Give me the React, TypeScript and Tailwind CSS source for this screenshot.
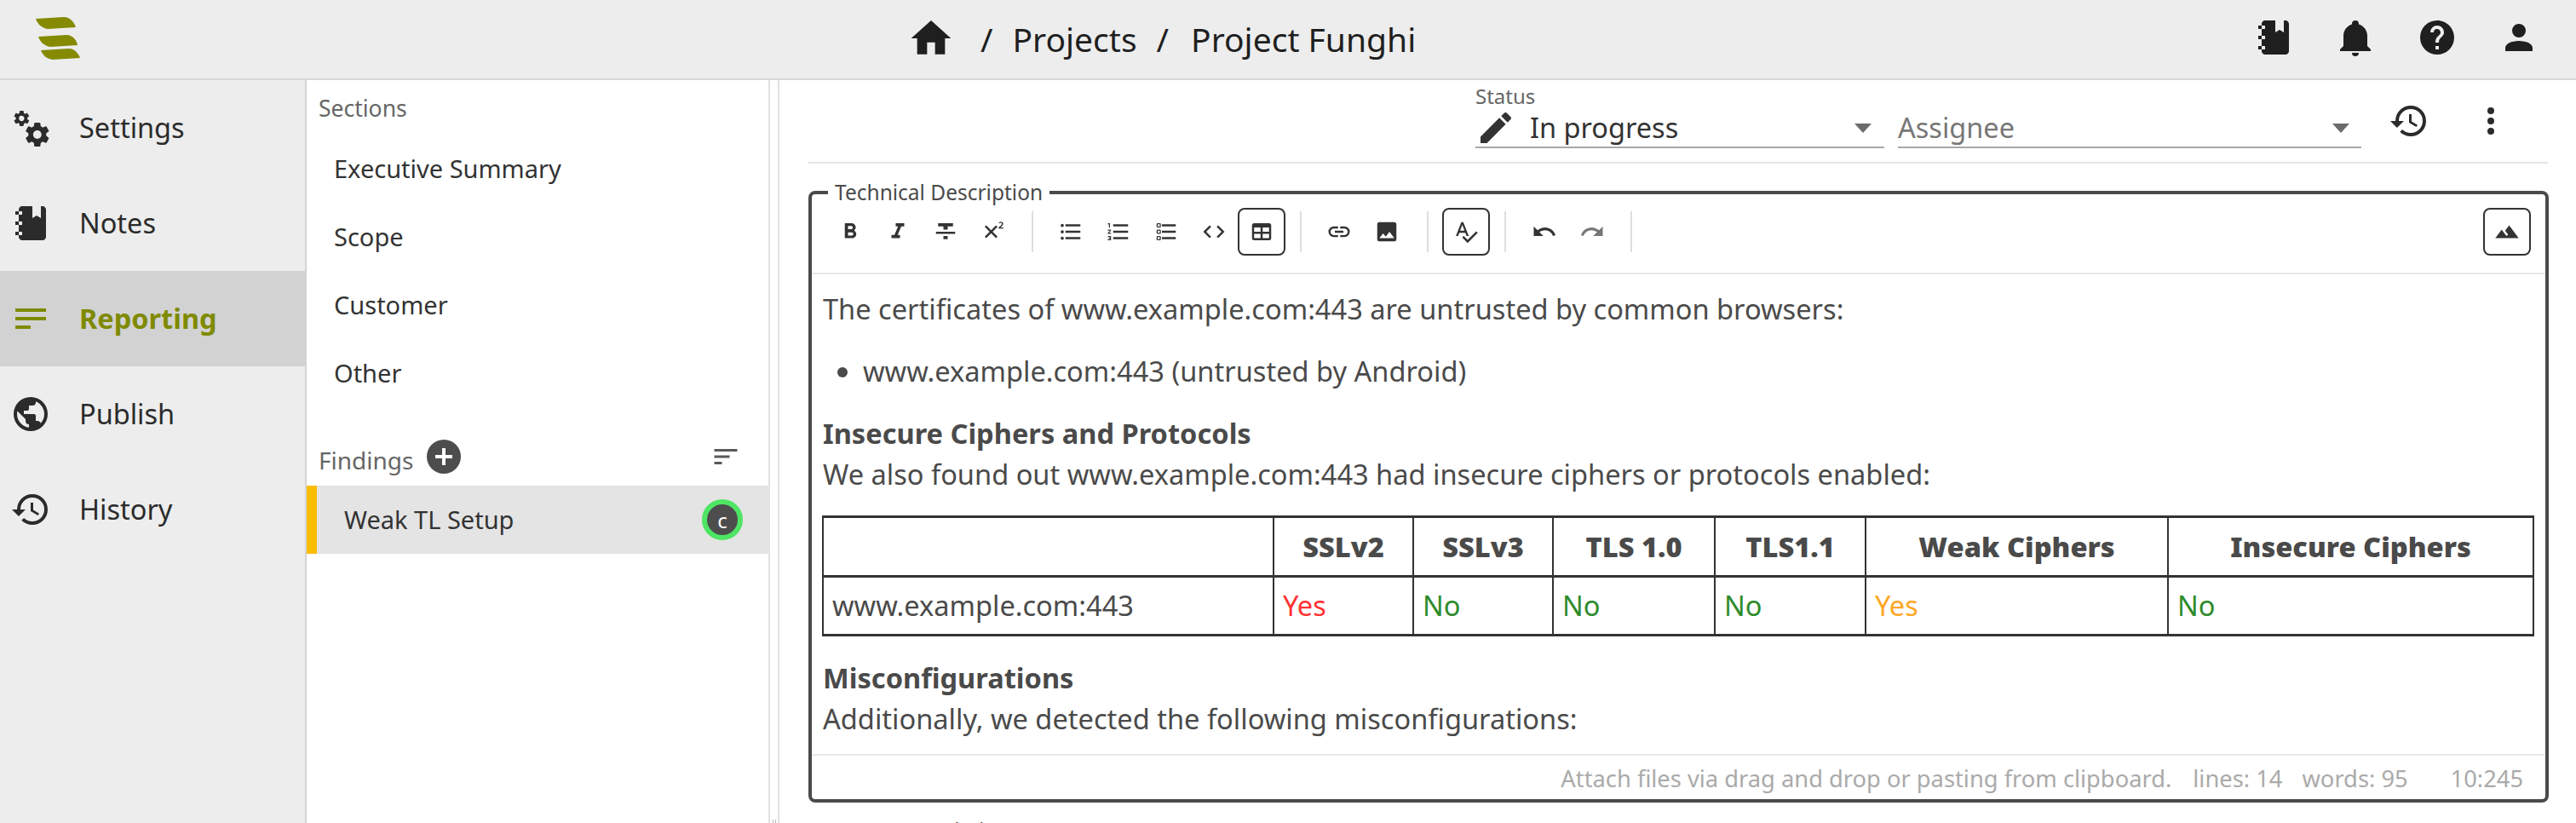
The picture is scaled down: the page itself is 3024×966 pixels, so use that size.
import type { ReactNode } from 'react'

const P = {
  home: 'M10,20V14H14V20H19V12H22L12,3L2,12H5V20H10Z',
  cogs: 'M15.9,18.45C17.25,18.45 18.35,17.35 18.35,16C18.35,14.65 17.25,13.55 15.9,13.55C14.54,13.55 13.45,14.65 13.45,16C13.45,17.35 14.54,18.45 15.9,18.45M21.1,16.68L22.58,17.84C22.71,17.95 22.75,18.13 22.66,18.29L21.26,20.71C21.17,20.86 21,20.92 20.83,20.86L19.09,20.16C18.73,20.44 18.33,20.67 17.91,20.85L17.64,22.7C17.62,22.87 17.47,23 17.3,23H14.5C14.32,23 14.18,22.87 14.15,22.7L13.89,20.85C13.46,20.67 13.07,20.44 12.71,20.16L10.96,20.86C10.81,20.92 10.62,20.86 10.54,20.71L9.14,18.29C9.05,18.13 9.09,17.95 9.22,17.84L10.7,16.68L10.65,16L10.7,15.31L9.22,14.16C9.09,14.05 9.05,13.86 9.14,13.71L10.54,11.29C10.62,11.13 10.81,11.07 10.96,11.13L12.71,11.84C13.07,11.56 13.46,11.32 13.89,11.15L14.15,9.29C14.18,9.13 14.32,9 14.5,9H17.3C17.47,9 17.62,9.13 17.64,9.29L17.91,11.15C18.33,11.32 18.73,11.56 19.09,11.84L20.83,11.13C21,11.07 21.17,11.13 21.26,11.29L22.66,13.71C22.75,13.86 22.71,14.05 22.58,14.16L21.1,15.31L21.15,16L21.1,16.68M6.69,8.07C7.56,8.07 8.26,7.37 8.26,6.5C8.26,5.63 7.56,4.92 6.69,4.92A1.58,1.58 0 0,0 5.11,6.5C5.11,7.37 5.82,8.07 6.69,8.07M10.03,6.94L11,7.68C11.07,7.75 11.09,7.87 11.03,7.97L10.13,9.53C10.08,9.63 9.96,9.67 9.86,9.63L8.74,9.18L8,9.62L7.81,10.81C7.79,10.92 7.7,11 7.59,11H5.79C5.67,11 5.58,10.92 5.56,10.81L5.4,9.62L4.64,9.18L3.5,9.63C3.41,9.67 3.3,9.63 3.24,9.53L2.34,7.97C2.28,7.87 2.31,7.75 2.39,7.68L3.34,6.94L3.31,6.5L3.34,6.06L2.39,5.32C2.31,5.25 2.28,5.13 2.34,5.03L3.24,3.47C3.3,3.37 3.41,3.33 3.5,3.37L4.63,3.82L5.4,3.38L5.56,2.19C5.58,2.08 5.67,2 5.79,2H7.59C7.7,2 7.79,2.08 7.81,2.19L8,3.38L8.74,3.82L9.86,3.37C9.96,3.33 10.08,3.37 10.13,3.47L11.03,5.03C11.09,5.13 11.07,5.25 11,5.32L10.03,6.06L10.06,6.5L10.03,6.94Z',
  notebook: 'M3,7V5H5V4C5,2.89 5.9,2 7,2H13V9L15.5,7.5L18,9V2H19C20.05,2 21,2.95 21,4V20C21,21.05 20.05,22 19,22H7C5.95,22 5,21.05 5,20V19H3V17H5V13H3V11H5V7H3M5,5V7H7V5H5M5,19H7V17H5V19M5,13H7V11H5V13Z',
  text: 'M21,6V8H3V6H21M3,18H12V16H3V18M3,13H21V11H3V13Z',
  earth: 'M17.9,17.39C17.64,16.59 16.89,16 16,16H15V13A1,1 0 0,0 14,12H8V10H10A1,1 0 0,0 11,9V7H13A2,2 0 0,0 15,5V4.59C17.93,5.77 20,8.64 20,12C20,14.08 19.2,15.97 17.9,17.39M11,19.93C7.05,19.44 4,16.08 4,12C4,11.38 4.08,10.78 4.21,10.21L9,15V16A2,2 0 0,0 11,18M12,2A10,10 0 0,0 2,12A10,10 0 0,0 12,22A10,10 0 0,0 22,12A10,10 0 0,0 12,2Z',
  history: 'M13.5,8H12V13L16.28,15.54L17,14.33L13.5,12.25V8M13,3A9,9 0 0,0 4,12H1L4.96,16.03L9,12H6A7,7 0 0,1 13,5A7,7 0 0,1 20,12A7,7 0 0,1 13,19C11.07,19 9.32,18.21 8.06,16.94L6.64,18.36C8.27,20 10.5,21 13,21A9,9 0 0,0 22,12A9,9 0 0,0 13,3',
  sort: 'M3,13H15V11H3M3,6V8H21V6M3,18H9V16H3V18Z',
  bell: 'M21,19V20H3V19L5,17V11C5,7.9 7.03,5.17 10,4.29C10,4.19 10,4.1 10,4A2,2 0 0,1 12,2A2,2 0 0,1 14,4C14,4.1 14,4.19 14,4.29C16.97,5.17 19,7.9 19,11V17L21,19M14,21A2,2 0 0,1 12,23A2,2 0 0,1 10,21',
  help: 'M15.07,11.25L14.17,12.17C13.45,12.89 13,13.5 13,15H11V14.5C11,13.39 11.45,12.39 12.17,11.67L13.41,10.41C13.78,10.05 14,9.55 14,9C14,7.89 13.1,7 12,7A2,2 0 0,0 10,9H8A4,4 0 0,1 12,5A4,4 0 0,1 16,9C16,9.88 15.64,10.67 15.07,11.25M13,19H11V17H13M12,2A10,10 0 0,0 2,12A10,10 0 0,0 12,22A10,10 0 0,0 22,12C22,6.47 17.5,2 12,2Z',
  account: 'M12,4A4,4 0 0,1 16,8A4,4 0 0,1 12,12A4,4 0 0,1 8,8A4,4 0 0,1 12,4M12,14C16.42,14 20,15.79 20,18V20H4V18C4,15.79 7.58,14 12,14Z',
  pencil: 'M20.71,7.04C21.1,6.65 21.1,6 20.71,5.63L18.37,3.29C18,2.9 17.35,2.9 16.96,3.29L15.12,5.12L18.87,8.87M3,17.25V21H6.75L17.81,9.93L14.06,6.18L3,17.25Z',
  dots: 'M12,16A2,2 0 0,1 14,18A2,2 0 0,1 12,20A2,2 0 0,1 10,18A2,2 0 0,1 12,16M12,10A2,2 0 0,1 14,12A2,2 0 0,1 12,14A2,2 0 0,1 10,12A2,2 0 0,1 12,10M12,4A2,2 0 0,1 14,6A2,2 0 0,1 12,8A2,2 0 0,1 10,6A2,2 0 0,1 12,4Z',
  plus: 'M17,13H13V17H11V13H7V11H11V7H13V11H17M12,2A10,10 0 0,0 2,12A10,10 0 0,0 12,22A10,10 0 0,0 22,12A10,10 0 0,0 12,2Z',
  bold: 'M13.5,15.5H10V12.5H13.5A1.5,1.5 0 0,1 15,14A1.5,1.5 0 0,1 13.5,15.5M10,6.5H13A1.5,1.5 0 0,1 14.5,8A1.5,1.5 0 0,1 13,9.5H10M15.6,10.79C16.57,10.11 17.25,9 17.25,8C17.25,5.74 15.5,4 13.25,4H7V18H14.04C16.14,18 17.75,16.3 17.75,14.21C17.75,12.69 16.89,11.39 15.6,10.79Z',
  italic: 'M10,4V7H12.21L8.79,15H6V18H14V15H11.79L15.21,7H18V4H10Z',
  strike: 'M3,14H21V12H3M5,4V7H10V10H14V7H19V4M10,19H14V16H10V19Z',
  sup: 'M16,7.41L11.41,12L16,16.59L14.59,18L10,13.41L5.41,18L4,16.59L8.59,12L4,7.41L5.41,6L10,10.59L14.59,6L16,7.41M17,9V8L19.2,5.9C19.7,5.4 20,5 20,4.5C20,4 19.6,3.6 19,3.6C18.4,3.6 17.9,3.8 17.4,4.1V3C17.9,2.7 18.5,2.5 19.2,2.5C20.4,2.5 21.3,3.2 21.3,4.4C21.3,5.2 20.9,5.8 20.2,6.5L18.8,7.9H21.5V9H17Z',
  ul: 'M7,5H21V7H7V5M7,13V11H21V13H7M4,4.5A1.5,1.5 0 0,1 5.5,6A1.5,1.5 0 0,1 4,7.5A1.5,1.5 0 0,1 2.5,6A1.5,1.5 0 0,1 4,4.5M4,10.5A1.5,1.5 0 0,1 5.5,12A1.5,1.5 0 0,1 4,13.5A1.5,1.5 0 0,1 2.5,12A1.5,1.5 0 0,1 4,10.5M7,19V17H21V19H7M4,16.5A1.5,1.5 0 0,1 5.5,18A1.5,1.5 0 0,1 4,19.5A1.5,1.5 0 0,1 2.5,18A1.5,1.5 0 0,1 4,16.5Z',
  ol: 'M7,13V11H21V13H7M7,19V17H21V19H7M7,7V5H21V7H7M3,8V5H2V4H4V8H3M2,17V16H5V20H2V19H4V18.5H3V17.5H4V17H2M4.25,10A0.75,0.75 0 0,1 5,10.75C5,10.95 4.92,11.14 4.79,11.27L3.12,13H5V14H2V13.08L4,11H2V10H4.25Z',
  task: 'M21,19V17H8V19H21M21,13V11H8V13H21M8,7H21V5H8V7M4,5V7H6V5H4M3,5A1,1 0 0,1 4,4H6A1,1 0 0,1 7,5V7A1,1 0 0,1 6,8H4A1,1 0 0,1 3,7V5M4,11V13H6V11H4M3,11A1,1 0 0,1 4,10H6A1,1 0 0,1 7,11V13A1,1 0 0,1 6,14H4A1,1 0 0,1 3,13V11M4,17V19H6V17H4M3,17A1,1 0 0,1 4,16H6A1,1 0 0,1 7,17V19A1,1 0 0,1 6,20H4A1,1 0 0,1 3,19V17Z',
  code: 'M14.6,16.6L19.2,12L14.6,7.4L16,6L22,12L16,18L14.6,16.6M9.4,16.6L4.8,12L9.4,7.4L8,6L2,12L8,18L9.4,16.6Z',
  table: 'M5,4H19A2,2 0 0,1 21,6V18A2,2 0 0,1 19,20H5A2,2 0 0,1 3,18V6A2,2 0 0,1 5,4M5,8V12H11V8H5M13,8V12H19V8H13M5,14V18H11V14H5M13,14V18H19V14H13Z',
  link: 'M3.9,12C3.9,10.29 5.29,8.9 7,8.9H11V7H7A5,5 0 0,0 2,12A5,5 0 0,0 7,17H11V15.1H7C5.29,15.1 3.9,13.71 3.9,12M8,13H16V11H8V13M17,7H13V8.9H17C18.71,8.9 20.1,10.29 20.1,12C20.1,13.71 18.71,15.1 17,15.1H13V17H17A5,5 0 0,0 22,12A5,5 0 0,0 17,7Z',
  image: 'M8.5,13.5L11,16.5L14.5,12L19,18H5M21,19V5C21,3.89 20.1,3 19,3H5A2,2 0 0,0 3,5V19A2,2 0 0,0 5,21H19A2,2 0 0,0 21,19Z',
  spell: 'M21.59,11.59L13.5,19.68L9.83,16L8.42,17.41L13.5,22.5L23,13M6.43,11L8.5,5.5L10.57,11M12.45,16H14.54L9.43,3H7.57L2.46,16H4.55L5.67,13H11.31L12.45,16Z',
  undo: 'M12.5,8C9.85,8 7.45,9 5.6,10.6L2,7V16H11L7.38,12.38C8.77,11.22 10.54,10.5 12.5,10.5C16.04,10.5 19.05,12.81 20.1,16L22.47,15.22C21.08,11.03 17.15,8 12.5,8Z',
  redo: 'M18.4,10.6C16.55,9 14.15,8 11.5,8C6.85,8 2.92,11.03 1.54,15.22L3.9,16C4.95,12.81 7.95,10.5 11.5,10.5C13.45,10.5 15.23,11.22 16.62,12.38L13,16H22V7L18.4,10.6Z',
  terrain: 'M14,6L10.25,11L13.1,14.8L11.5,16C9.81,13.75 7,10 7,10L1,18H23L14,6Z',
}

function Icon({ d, className }: { d: string; className: string }) {
  return (
    <svg viewBox="0 0 24 24" fill="currentColor" className={className}>
      <path d={d} />
    </svg>
  )
}

function Logo() {
  return (
    <svg viewBox="0 0 100 92" className="h-[92px] w-[100px] shrink-0 fill-[#858a00]">
      <path d="M42 22L75 20C82 20 87 26 89 32L56 34C49 33 44 28 42 22Z" />
      <path d="M45 43L78 41C85 41 90 47 91 53L59 55C52 54 47 49 45 43Z" />
      <path d="M48 59L81 57C88 57 92 63 94 68L62 70C55 69 50 65 48 59Z" />
    </svg>
  )
}

function TopBar() {
  return (
    <header className="flex h-[94px] shrink-0 items-center border-b-2 border-[#d8d8d8] bg-[#ededed] text-[#1f1f1f]">
      <Logo />
      <nav className="ml-[965px] flex items-center text-[39px]">
        <Icon d={P.home} className="mb-[2px] h-14 w-14" />
        <span className="ml-[30px]">/</span>
        <span className="ml-[23px]">Projects</span>
        <span className="ml-[23px]">/</span>
        <span className="ml-[26px]">Project Funghi</span>
      </nav>
      <div className="ml-auto flex pb-1 pr-[43px]">
        <Icon d={P.notebook} className="h-12 w-12" />
        <Icon d={P.bell} className="ml-12 h-12 w-12" />
        <Icon d={P.help} className="ml-12 h-12 w-12" />
        <Icon d={P.account} className="ml-12 h-12 w-12" />
      </div>
    </header>
  )
}

const navItems = [
  { label: 'Settings', icon: P.cogs },
  { label: 'Notes', icon: P.notebook },
  { label: 'Reporting', icon: P.text, active: true },
  { label: 'Publish', icon: P.earth },
  { label: 'History', icon: P.history },
]

function MainNav() {
  return (
    <aside className="w-[360px] shrink-0 border-r-2 border-[#d4d4d4] bg-[#ededed]">
      {navItems.map((item) => (
        <div
          key={item.label}
          className={
            item.active
              ? 'flex h-[112px] items-center gap-[33px] bg-[#d2d2d2] pl-[12px] text-[32.5px] font-bold text-[#7f8a00]'
              : 'flex h-[112px] items-center gap-[33px] pl-[12px] text-[32.5px] text-[#2b2b2b]'
          }
        >
          <Icon d={item.icon} className="h-12 w-12 shrink-0" />
          {item.label}
        </div>
      ))}
    </aside>
  )
}

function SectionsList() {
  return (
    <aside className="flex w-[555px] shrink-0 border-r-2 border-[#e2e2e2]">
      <div className="flex w-[544px] shrink-0 flex-col border-r-2 border-[#e2e2e2]">
        <div className="flex h-[64px] items-center pl-[14px] pt-[3px] text-[26.5px] text-[#666]">Sections</div>
        {['Executive Summary', 'Scope', 'Customer', 'Other'].map((s) => (
          <div key={s} className="flex h-[80px] items-center pl-[32px] text-[29px] text-[#333]">
            {s}
          </div>
        ))}
        <div className="mt-[32px] flex h-[60px] items-center pl-[14px] pr-[32px] text-[#666]">
          <span className="text-[28px]">Findings</span>
          <Icon d={P.plus} className="mb-[8px] ml-[12px] h-12 w-12 text-[#4d4d4d]" />
          <Icon d={P.sort} className="mb-[8px] ml-auto h-9 w-9 text-[#5a5a5a]" />
        </div>
        <div className="flex h-[80px] items-center border-l-[12px] border-[#fbbc05] bg-[#e4e4e4] pl-[32px] pr-[30px] text-[29px] text-[#333]">
          Weak TL Setup
          <span className="ml-auto flex h-12 w-12 items-center justify-center rounded-full border-[6px] border-[#4ee464] bg-[#4d4d4d] pt-[2px] text-[24px] leading-none text-white">
            c
          </span>
        </div>
      </div>
      <div className="flex grow items-end justify-center gap-[2px]">
        <span className="h-[4px] w-px bg-[#bbb]" />
        <span className="h-[4px] w-px bg-[#bbb]" />
      </div>
    </aside>
  )
}

function ToolBtn({ d, boxed, className }: { d: string; boxed?: boolean; className?: string }) {
  return (
    <span
      className={
        (boxed
          ? 'rounded-lg border-2 border-[#333] '
          : '') + 'flex h-[56px] w-[56px] shrink-0 items-center justify-center ' + (className ?? 'text-[#333]')
      }
    >
      <Icon d={d} className="h-[30px] w-[30px]" />
    </span>
  )
}

function Sep({ className }: { className?: string }) {
  return <span className={'h-[48px] w-[2px] shrink-0 bg-[#dedede] ' + (className ?? 'ml-[17px] mr-[16px]')} />
}

function Toolbar() {
  return (
    <div className="flex h-[84px] items-center border-b-2 border-[#e8e8e8] pb-[15px] pl-[17px] pr-[17px]">
      <ToolBtn d={P.bold} />
      <ToolBtn d={P.italic} />
      <ToolBtn d={P.strike} />
      <ToolBtn d={P.sup} />
      <Sep />
      <ToolBtn d={P.ul} />
      <ToolBtn d={P.ol} />
      <ToolBtn d={P.task} />
      <ToolBtn d={P.code} />
      <ToolBtn d={P.table} boxed />
      <Sep />
      <ToolBtn d={P.link} />
      <ToolBtn d={P.image} />
      <Sep className="ml-[19px] mr-[16px]" />
      <ToolBtn d={P.spell} boxed />
      <Sep className="ml-[17px] mr-[17px]" />
      <ToolBtn d={P.undo} />
      <ToolBtn d={P.redo} className="text-[#777]" />
      <Sep />
      <ToolBtn d={P.terrain} boxed className="ml-auto text-[#333]" />
    </div>
  )
}

function Cell({ children, className }: { children: ReactNode; className?: string }) {
  return (
    <td className={'border-x-2 border-y-[3px] border-[#333] px-[10px] align-middle ' + (className ?? '')}>{children}</td>
  )
}

function Th({ children, w }: { children?: ReactNode; w: string }) {
  return <th className={'border-x-2 border-y-[3px] border-[#333] text-center font-black ' + w}>{children}</th>
}

function ResultTable() {
  return (
    <table className="-ml-px mt-[24px] w-[2008px] table-fixed border-collapse">
      <thead>
        <tr className="h-[70px]">
          <Th w="w-[529px]" />
          <Th w="w-[164px]">SSLv2</Th>
          <Th w="w-[164px]">SSLv3</Th>
          <Th w="w-[190px]">TLS 1.0</Th>
          <Th w="w-[177px]">TLS1.1</Th>
          <Th w="w-[355px]">Weak Ciphers</Th>
          <Th w="w-[429px]">Insecure Ciphers</Th>
        </tr>
      </thead>
      <tbody>
        <tr className="h-[69px]">
          <Cell>www.example.com:443</Cell>
          <Cell className="text-[#ff3333]">Yes</Cell>
          <Cell className="text-[#2e8b2b]">No</Cell>
          <Cell className="text-[#2e8b2b]">No</Cell>
          <Cell className="text-[#2e8b2b]">No</Cell>
          <Cell className="text-[#ffa726]">Yes</Cell>
          <Cell className="text-[#2e8b2b]">No</Cell>
        </tr>
      </tbody>
    </table>
  )
}

function Editor() {
  return (
    <fieldset className="ml-[34px] mt-[22px] h-[728px] w-[2043px] rounded-lg border-4 border-[#4a4a4a]">
      <legend className="ml-[19px] px-[8px] text-[24.5px] leading-[24px] text-[#4a4a4a]">Technical Description</legend>
      <Toolbar />
      <div className="h-[563px] overflow-hidden pl-[13px] pt-[17px] text-[32.6px] leading-[48px] text-[#4a4a4a]">
        <p>The certificates of www.example.com:443 are untrusted by common browsers:</p>
        <ul className="mt-[25px] list-disc pl-[47px]">
          <li>www.example.com:443 (untrusted by Android)</li>
        </ul>
        <p className="mt-[25px] font-bold">Insecure Ciphers and Protocols</p>
        <p>We also found out www.example.com:443 had insecure ciphers or protocols enabled:</p>
        <ResultTable />
        <p className="mt-[25px] font-bold">Misconfigurations</p>
        <p>Additionally, we detected the following misconfigurations:</p>
      </div>
      <div className="flex h-[53px] items-center justify-end border-t-2 border-[#e8e8e8] pr-[26px] pt-[4px] text-[27.3px] text-[#aaa]">
        <span>Attach files via drag and drop or pasting from clipboard.</span>
        <span className="ml-[25px]">lines: 14</span>
        <span className="ml-[23px]">words: 95</span>
        <span className="ml-[50px]">10:245</span>
      </div>
    </fieldset>
  )
}

function StatusBar() {
  return (
    <div className="ml-[33px] flex h-[98px] w-[2043px] border-b-2 border-[#e6e6e6]">
      <div className="ml-[784px] flex w-[480px] flex-col">
        <span className="mt-[4px] text-[24px] leading-[30px] text-[#666]">Status</span>
        <div className="flex h-[46px] items-center border-b-2 border-[#a8a8a8] text-[32.5px] text-[#333]">
          <Icon d={P.pencil} className="h-12 w-12 shrink-0" />
          <span className="ml-[16px]">In progress</span>
          <span className="ml-auto mr-[15px] h-0 w-0 border-x-[10px] border-t-[11px] border-x-transparent border-t-[#6b6b6b]" />
        </div>
      </div>
      <div className="ml-[16px] flex h-[80px] w-[544px] items-center border-b-2 border-[#a8a8a8] pt-[34px] text-[32.5px] text-[#777]">
        Assignee
        <span className="ml-auto mr-[14px] h-0 w-0 border-x-[10px] border-t-[11px] border-x-transparent border-t-[#6b6b6b]" />
      </div>
      <Icon d={P.history} className="ml-[32px] mt-[24px] h-12 w-12 text-[#2b2b2b]" />
      <Icon d={P.dots} className="ml-[48px] mt-[24px] h-12 w-12 text-[#2b2b2b]" />
    </div>
  )
}

export default function App() {
  return (
    <div className="flex h-[966px] w-[3024px] flex-col overflow-hidden bg-white font-['Noto_Sans',sans-serif]">
      <TopBar />
      <div className="flex min-h-0 flex-1">
        <MainNav />
        <SectionsList />
        <main className="min-w-0 flex-1">
          <StatusBar />
          <Editor />
          <div className="ml-[66px] mt-[21px] text-[24.5px] leading-[24px] text-[#4a4a4a]">Recommendation</div>
        </main>
      </div>
    </div>
  )
}
